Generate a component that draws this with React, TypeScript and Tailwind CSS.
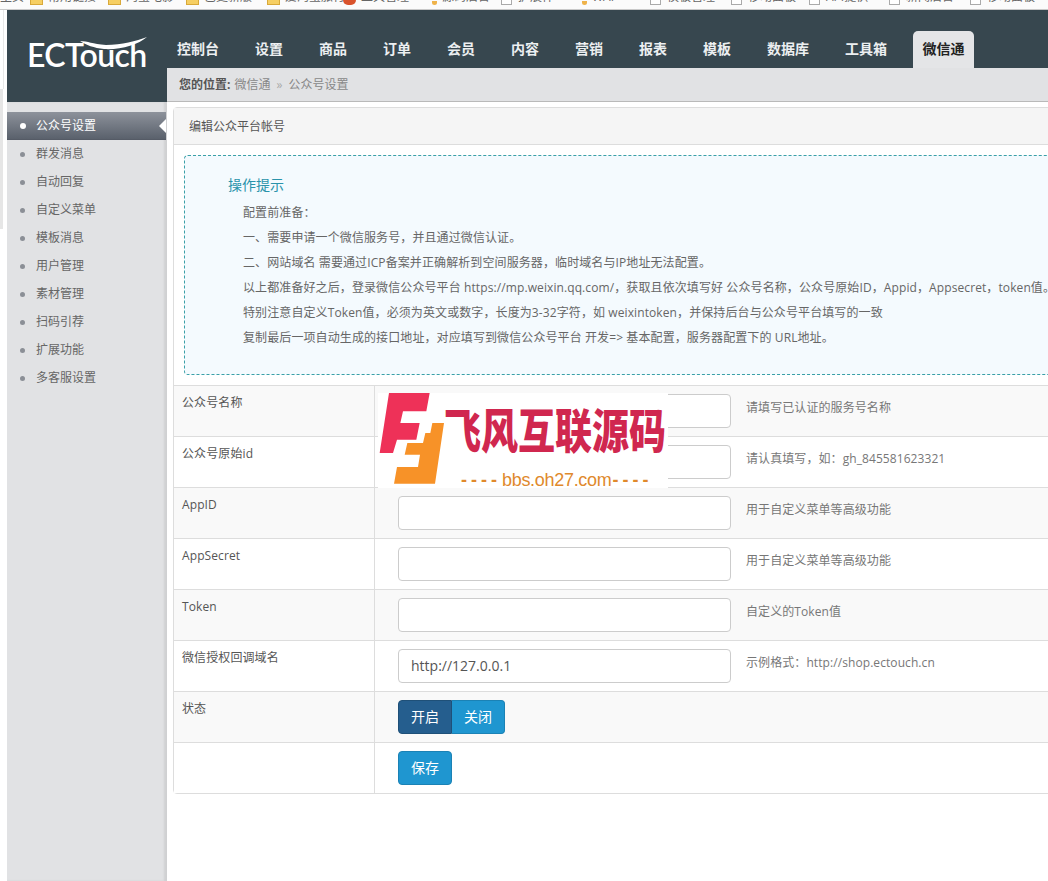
const font = '[font-family:"Open_Sans","Noto_Sans_CJK_SC",sans-serif]';

const bookmarks = [
  { w: 'w-[30px]', t: '主页', k: 'none' },
  { w: 'w-[78px]', t: '常用链接', k: 'folder' },
  { w: 'w-[78px]', t: '淘宝电影', k: 'folder' },
  { w: 'w-[81px]', t: '已更新版', k: 'folder' },
  { w: 'w-[76px]', t: '爱淘宝旅行', k: 'folder' },
  { w: 'w-[89px]', t: '工具管理', k: 'fire' },
  { w: 'w-[69px]', t: '源码后台', k: 'bulb' },
  { w: 'w-[81px]', t: '扩展件', k: 'page' },
  { w: 'w-[68px]', t: 'WAP', k: 'bulb' },
  { w: 'w-[81px]', t: '模板管理', k: 'page' },
  { w: 'w-[78px]', t: '移动面板', k: 'page' },
  { w: 'w-[80px]', t: 'API提供', k: 'page' },
  { w: 'w-[81px]', t: '新闻后台', k: 'page' },
  { w: 'w-[78px]', t: '移动面板', k: 'page' },
];

const navItems = ['控制台', '设置', '商品', '订单', '会员', '内容', '营销', '报表', '模板', '数据库', '工具箱'];
const sideItems = ['群发消息', '自动回复', '自定义菜单', '模板消息', '用户管理', '素材管理', '扫码引荐', '扩展功能', '多客服设置'];
const tips = [
  '配置前准备：',
  '一、需要申请一个微信服务号，并且通过微信认证。',
  '二、网站域名 需要通过ICP备案并正确解析到空间服务器，临时域名与IP地址无法配置。',
  '以上都准备好之后，登录微信公众号平台 https://mp.weixin.qq.com/，获取且依次填写好 公众号名称，公众号原始ID，Appid，Appsecret，token值。',
  '特别注意自定义Token值，必须为英文或数字，长度为3-32字符，如 weixintoken，并保持后台与公众号平台填写的一致',
  '复制最后一项自动生成的接口地址，对应填写到微信公众号平台 开发=> 基本配置，服务器配置下的 URL地址。',
];
const rows = [
  { l: '公众号名称', h: '请填写已认证的服务号名称', v: '', bg: 'bg-[#f9f9f9]' },
  { l: '公众号原始id', h: '请认真填写，如：gh_845581623321', v: '', bg: 'bg-white' },
  { l: 'AppID', h: '用于自定义菜单等高级功能', v: '', bg: 'bg-[#f9f9f9]' },
  { l: 'AppSecret', h: '用于自定义菜单等高级功能', v: '', bg: 'bg-white' },
  { l: 'Token', h: '自定义的Token值', v: '', bg: 'bg-[#f9f9f9]' },
  { l: '微信授权回调域名', h: '示例格式：http://shop.ectouch.cn', v: 'http://127.0.0.1', bg: 'bg-white' },
];

function BookmarkIcon({ k }: { k: string }) {
  if (k === 'folder') return <span className="w-[13px] h-[5px] mr-[5px] shrink-0 bg-[#f6cf63] border-b border-x border-[#d9a93a]" />;
  if (k === 'fire') return <span className="w-[13px] h-[5px] mr-[5px] shrink-0 rounded-b-full bg-[#d9532c]" />;
  if (k === 'bulb') return <span className="w-[5px] h-[4px] mr-[5px] shrink-0 rounded-b-full bg-[#efb34a]" />;
  if (k === 'page') return <span className="w-[11px] h-[5px] mr-[6px] shrink-0 border-b border-x border-[#aaaaaa] bg-white" />;
  return null;
}

function Row({ label, bg, children }: { label: string; bg: string; children: React.ReactNode }) {
  return (
    <div className={`flex h-[51px] border-t border-[#dddddd] ${bg}`}>
      <div className="w-[201px] shrink-0 border-r border-[#dddddd] pl-[8px] pt-[8px] text-[12px] leading-[17px] tracking-[0.1px] text-[#555555]">{label}</div>
      <div className="flex items-center pl-[23px] pb-[1px]">{children}</div>
    </div>
  );
}

export default function App() {
  return (
    <div className={`${font} w-[1048px] h-[881px] overflow-hidden relative bg-white flex flex-col`}>
      <div className="h-[10px] shrink-0 bg-[#fbfbfb] border-b border-[#c9c9c9] overflow-hidden flex items-start">
        {bookmarks.map((b, i) => (
          <div key={i} className={`${b.w} shrink-0 flex items-end h-[5px] overflow-hidden`}>
            <BookmarkIcon k={b.k} />
            <span className="text-[12px] leading-[16px] text-[#666666] whitespace-nowrap h-[16px] shrink-0">{b.t}</span>
          </div>
        ))}
      </div>

      <div className="flex flex-1 min-h-0">
        <div className="w-[7px] shrink-0 bg-white flex flex-col">
          <div className="h-[79px] pl-[3px]">
            <div className="w-[1px] h-full bg-[#e8e8e8]" />
          </div>
          <div className="w-[3px] h-[140px] bg-[#e6e6e6]" />
        </div>

        <div className="w-[160px] shrink-0 flex flex-col">
          <div className="h-[92px] bg-[#37474f] relative flex items-center pl-[20px] pb-[3px]">
            <span className="text-[32px] leading-[36px] tracking-[-0.6px] font-semibold text-white font-['Lato',sans-serif]">ECTouch</span>
            <svg className="absolute left-[73px] top-[25px]" width="70" height="20" viewBox="0 0 70 20" fill="none">
              <path d="M0 6 C8 6 12 9 26 10 C42 10 56 6 67 2 C58 10 40 15 24 14 C14 13 6 10 0 6 Z" fill="#ffffff" />
            </svg>
          </div>
          <div className="flex-1 bg-[#e1e2e4] pt-[10px] border-r border-[#cfd0d2] shadow-[inset_-2px_0_2px_rgba(0,0,0,0.08)]">
            <div className="h-[28px] relative flex items-center pl-[13px] bg-gradient-to-b from-[#8d929b] to-[#5a616c] border-b border-[#555b66] text-[12px] text-white">
              <span className="w-[6px] h-[6px] rounded-full bg-white mr-[10px]" />
              公众号设置
              <span className="absolute right-0 top-[7px] w-0 h-0 border-y-[7px] border-y-transparent border-r-[7px] border-r-white" />
            </div>
            {sideItems.map((s) => (
              <div key={s} className="h-[28px] flex items-center pl-[13px] text-[12px] text-[#666666]">
                <span className="w-[5px] h-[5px] rounded-full bg-[#8b8f96] mr-[11px]" />
                {s}
              </div>
            ))}
          </div>
        </div>

        <div className="flex-1 min-w-0 flex flex-col">
          <div className="h-[58px] shrink-0 bg-[#37474f] flex items-end pl-[10px] gap-[36px]">
            {navItems.map((n) => (
              <div key={n} className="h-[37px] pb-[3px] flex items-center text-[14px] font-bold text-[#eceff1] whitespace-nowrap">{n}</div>
            ))}
            <div className="h-[37px] pb-[3px] -ml-[10px] w-[61px] flex items-center justify-center rounded-t-[5px] bg-[#e4e5e7] text-[14px] font-bold text-[#222222]">微信通</div>
          </div>
          <div className="h-[34px] shrink-0 bg-[#e1e2e4] border-b border-[#b9b9b9] flex items-center pl-[12px] text-[12px] text-[#888888]">
            <span className="font-bold text-[#555555]">您的位置:</span>
            <span className="ml-[4px]">微信通</span>
            <span className="mx-[6px] text-[12px] leading-[12px] text-[#aaaaaa]">»</span>
            <span>公众号设置</span>
          </div>

          <div className="pl-[6px] pt-[5px]">
            <div className="w-[920px] rounded-l-[4px] border border-[#dddddd] bg-white">
              <div className="h-[37px] pt-[1px] bg-[#f5f5f5] border-b border-[#dddddd] flex items-center pl-[15px] text-[12px] text-[#555555]">编辑公众平台帐号</div>
              <div className="p-[10px]">
                <div className="h-[220px] w-[880px] rounded-[4px] border border-dashed border-[#3aa0a8] bg-[#f4fafe] pt-[20px] pl-[43px]">
                  <div className="text-[14px] leading-[18px] mb-[6px] text-[#2a93ab]">操作提示</div>
                  {tips.map((t) => (
                    <div key={t} className="pl-[15px] text-[12px] leading-[25px] tracking-[0.1px] text-[#666666] whitespace-nowrap">{t}</div>
                  ))}
                </div>
              </div>
              {rows.map((r) => (
                <Row key={r.l} label={r.l} bg={r.bg}>
                  <input readOnly value={r.v} className="w-[333px] h-[34px] rounded-[4px] border border-[#cccccc] bg-white px-[12px] text-[14px] text-[#555555] outline-none" />
                  <span className="ml-[15px] mb-[5px] text-[12px] tracking-[0.08px] text-[#777777] whitespace-nowrap">{r.h}</span>
                </Row>
              ))}
              <Row label="状态" bg="bg-[#f9f9f9]">
                <div className="flex h-[34px] text-[14px] text-white">
                  <div className="w-[54px] flex items-center justify-center rounded-l-[4px] bg-[#255e8e] border border-[#1f5078]">开启</div>
                  <div className="w-[53px] flex items-center justify-center rounded-r-[4px] bg-[#1f96d0] border border-[#1b82b5] border-l-0">关闭</div>
                </div>
              </Row>
              <Row label="" bg="bg-white">
                <div className="w-[54px] h-[34px] flex items-center justify-center rounded-[4px] bg-[#1f96d0] border border-[#1b82b5] text-[14px] text-white">保存</div>
              </Row>
            </div>
          </div>
        </div>
      </div>

      <div className="absolute left-[378px] top-[393px] w-[290px] h-[95px] bg-white overflow-hidden">
        <svg className="absolute left-0 top-0" width="290" height="95" viewBox="55 40 870 285">
          <polygon points="88,40 210,40 200,95 130,95 122,130 180,130 170,180 112,180 100,220 60,220" fill="#ee3158" />
          <polygon points="218,130 253,130 226,312 103,312 112,262 175,262 181,225 135,225 143,190 190,190 197,160 212,160" fill="#f79228" />
        </svg>
        <div className="absolute left-[66px] top-[10px] text-[37px] leading-[50px] font-black scale-y-[1.25] text-[#d0274f] whitespace-nowrap font-['Noto_Sans_CJK_SC',sans-serif]">飞风互联源码</div>
        <div className="absolute left-[83px] top-[77px] flex text-[18px] leading-[20px] text-[#e0892c] whitespace-nowrap font-['Liberation_Sans',sans-serif]">
          <span className="tracking-[4px] font-bold">----</span>
          <span className="mx-[1px] tracking-[-0.3px]">bbs.oh27.com</span>
          <span className="tracking-[4px] font-bold">----</span>
        </div>
      </div>
    </div>
  );
}
